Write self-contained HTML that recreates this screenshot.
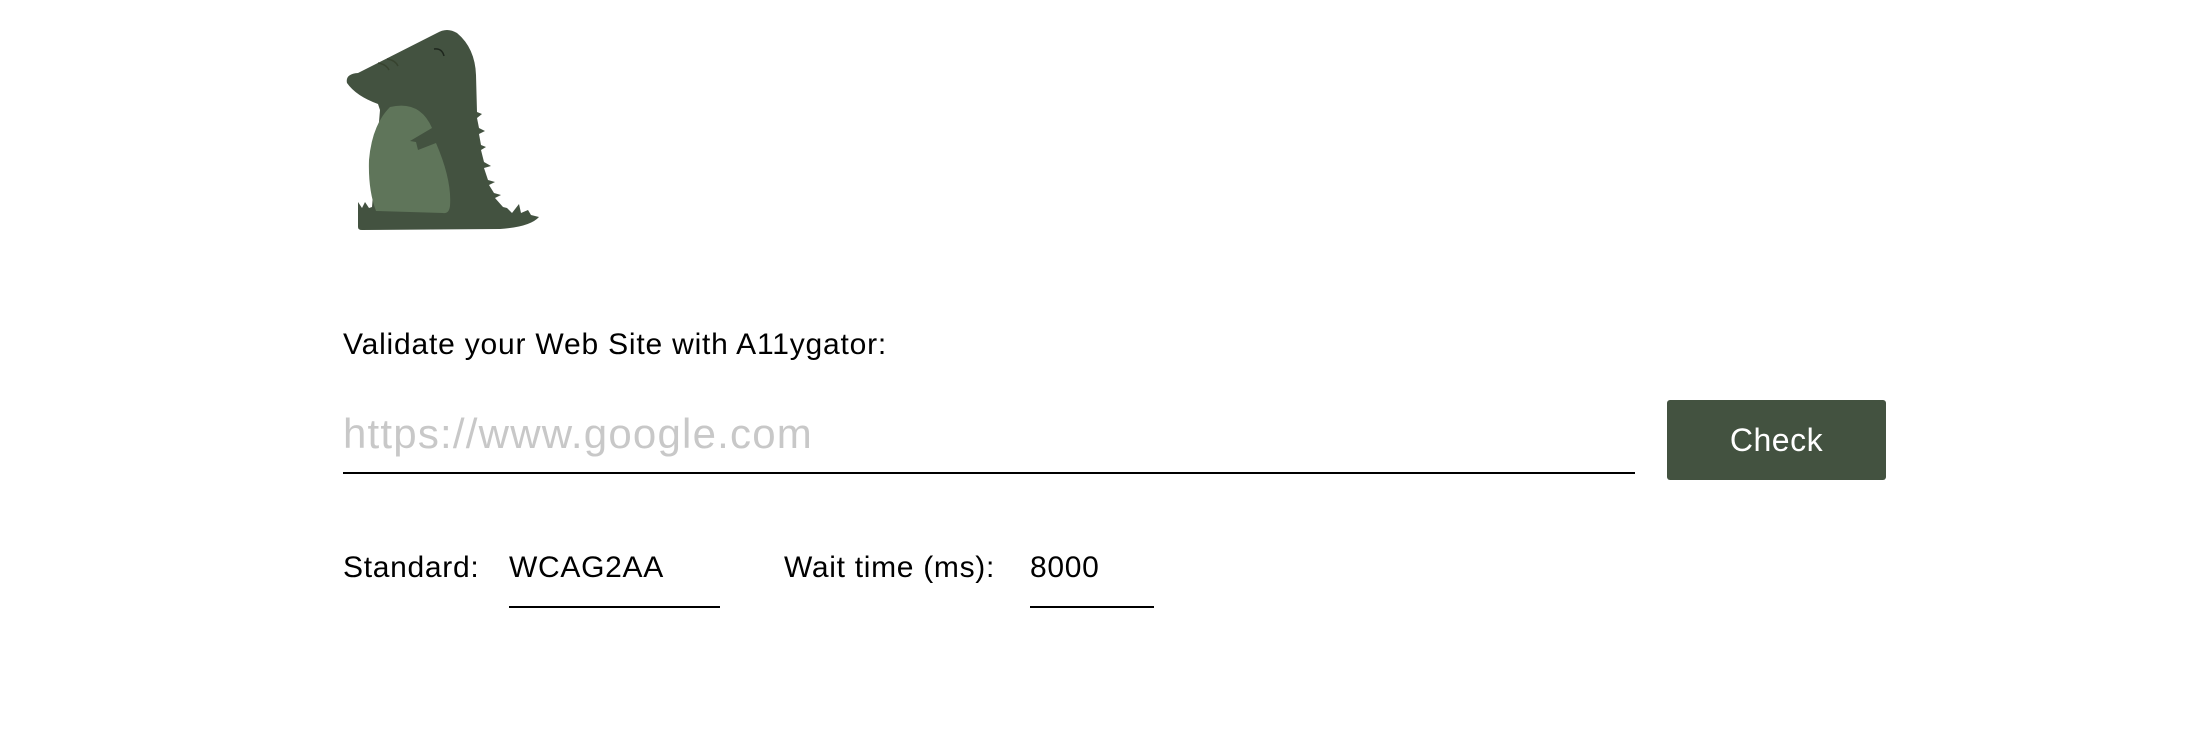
<!DOCTYPE html>
<html><head><meta charset="utf-8"><style>
html,body{margin:0;padding:0;background:#fff;width:2188px;height:750px;overflow:hidden;font-family:"Liberation Sans",Helvetica,Arial,sans-serif;}
.a{position:absolute;white-space:nowrap;color:#000;letter-spacing:0.7px;}
</style></head><body>
<svg width="2188" height="750" style="position:absolute;left:0;top:0">
<path fill="#435240" d="M358,73 L437,33 Q447,27 457,33 Q475,48 476,75 L477,112 L482,114 L477,118 L479,128 L485,131 L479,134 L481,145 L486,147 L481,150 L484,162 L491,166 L484,168 L488,180 L495,182 L489,185 L494,193 L501,195 L495,198 L503,207 L507,208 L512,213 L519,204 L521,213 L528,210 L531,215 L539,217 Q530,227 500,229 L362,230 Q358,230 358,227 L358,202 L362,208 L365,202 L369,208 L372,207 L380,110 L378,104 Q356,96 347,83 Q345,74 358,73 Z"/>
<path fill="#5f755a" d="M390,107 Q420,100 432,128 L410,141 L416,142 L418,150 L436,143 Q452,180 450,206 Q449,214 443,213 L376,211 Q368,190 369,160 Q372,125 390,107 Z"/>
<path d="M434,49 Q442,48 444,56" stroke="#1e261d" stroke-width="1.5" fill="none"/>
<path d="M378,63 Q386,64 389,70 M387,59 Q395,60 398,66" stroke="#37432f" stroke-width="1.5" fill="none"/>
</svg>
<div class="a" style="left:343px;top:328px;font-size:30px;letter-spacing:0.8px">Validate your Web Site with A11ygator:</div>
<div class="a" style="left:343px;top:410px;font-size:42px;color:#c8c8c8;letter-spacing:1.2px">https://www.google.com</div>
<div style="position:absolute;left:343px;top:472px;width:1292px;height:2px;background:#000"></div>
<div style="position:absolute;left:1667px;top:400px;width:219px;height:80px;background:#435240;border-radius:3px;color:#fff;font-size:32px;line-height:80px;text-align:center;letter-spacing:0.5px">Check</div>
<div class="a" style="left:343px;top:551px;font-size:30px;">Standard:</div>
<div class="a" style="left:509px;top:551px;font-size:30px;">WCAG2AA</div>
<div style="position:absolute;left:509px;top:606px;width:211px;height:2px;background:#000"></div>
<div class="a" style="left:784px;top:551px;font-size:30px;">Wait time (ms):</div>
<div class="a" style="left:1030px;top:551px;font-size:30px;">8000</div>
<div style="position:absolute;left:1030px;top:606px;width:124px;height:2px;background:#000"></div>
</body></html>
